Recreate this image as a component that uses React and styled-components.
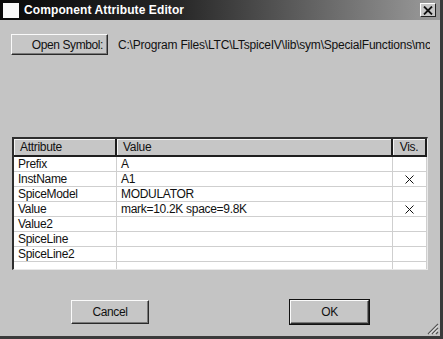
import styled, { createGlobalStyle } from "styled-components";

const GlobalStyle = createGlobalStyle`
  html, body {
    margin: 0;
    padding: 0;
    background: #c4c4c4;
  }
  * {
    box-sizing: border-box;
  }
`;

const Window = styled.div`
  width: 443px;
  height: 339px;
  background: #c4c4c4;
  border-right: 3px solid #3a3a3a;
  border-bottom: 3px solid #3a3a3a;
  display: flex;
  flex-direction: column;
  font-family: "Liberation Sans", Arial, sans-serif;
  font-size: 12px;
  color: #111;
  position: relative;
  overflow: hidden;
`;

const TitleBar = styled.div`
  height: 20px;
  display: flex;
  align-items: center;
  padding: 0 4px 0 3px;
  background: linear-gradient(to right, #0a0a0a 0%, #262626 40%, #9c9c9c 100%);
`;

const WinIcon = styled.div`
  width: 16px;
  height: 15px;
  background: #fafafa;
  margin-right: 5px;
`;

const Title = styled.span`
  flex: 1;
  color: #fff;
  font-weight: bold;
  font-size: 12px;
  letter-spacing: 0.1px;
`;

const CloseButton = styled.div`
  width: 16px;
  height: 14px;
  background: #c8c8c8;
  border: 1px solid;
  border-color: #fff #222 #222 #fff;
  display: flex;
  align-items: center;
  justify-content: center;
`;

const SymbolRow = styled.div`
  display: flex;
  align-items: center;
  margin: 14px 0 0 11px;
  white-space: nowrap;
`;

const Button = styled.div`
  width: ${(p) => p.$w}px;
  height: ${(p) => p.$h || 24}px;
  display: flex;
  align-items: center;
  justify-content: ${(p) => (p.$right ? "flex-end" : "center")};
  padding-right: ${(p) => (p.$right ? 4 : 0)}px;
  background: #c6c6c6;
  border: 1px solid;
  border-color: #fafafa #2a2a2a #2a2a2a #fafafa;
  box-shadow: ${(p) =>
    p.$default
      ? "0 0 0 1px #111, inset -1px -1px 0 #7a7a7a"
      : "inset -1px -1px 0 #7a7a7a"};
  font-size: 12px;
  letter-spacing: -0.4px;
`;

const PathText = styled.span`
  margin-left: 10px;
  overflow: hidden;
  width: 312px;
  letter-spacing: -0.2px;
`;

const Table = styled.div`
  margin: 82px 0 0 12px;
  width: 416px;
  height: 133px;
  background: #fff;
  border-top: 2px solid #2e2e2e;
  border-left: 2px solid #2e2e2e;
  border-right: 1px solid #e8e8e8;
  border-bottom: 1px solid #e8e8e8;
  overflow: hidden;
  display: grid;
  grid-template-columns: 103px 276px 1fr;
  grid-auto-rows: 15px;
  grid-template-rows: 18px;
  letter-spacing: -0.3px;
`;

const HeadCell = styled.div`
  background: #c6c6c6;
  border-right: 2px solid #1e1e1e;
  border-bottom: 2px solid #1e1e1e;
  box-shadow: inset 1px 1px 0 #f4f4f4;
  padding-left: ${(p) => (p.$center ? 0 : 6)}px;
  text-align: ${(p) => (p.$center ? "center" : "left")};
  line-height: 17px;
`;

const Cell = styled.div`
  border-right: 1px solid #cfcfcf;
  border-bottom: 1px solid #cfcfcf;
  padding-left: ${(p) => (p.$center ? 0 : 4)}px;
  display: flex;
  align-items: center;
  justify-content: ${(p) => (p.$center ? "center" : "flex-start")};
  white-space: nowrap;
  overflow: hidden;
`;

const ButtonRow = styled.div`
  display: flex;
  gap: 141px;
  margin: 30px 0 0 71px;
`;

const Grip = styled.svg`
  position: absolute;
  right: 1px;
  bottom: 1px;
`;

const VisMark = () => (
  <svg width="9" height="9" viewBox="0 0 9 9">
    <path d="M0.5 0.5 L8.5 8.5 M8.5 0.5 L0.5 8.5" stroke="#111" strokeWidth="1" />
  </svg>
);

const rows = [
  ["Prefix", "A", false],
  ["InstName", "A1", true],
  ["SpiceModel", "MODULATOR", false],
  ["Value", "mark=10.2K space=9.8K", true],
  ["Value2", "", false],
  ["SpiceLine", "", false],
  ["SpiceLine2", "", false],
  ["", "", false],
];

const App = () => {
  return (
    <>
      <GlobalStyle />
      <Window>
        <TitleBar>
          <WinIcon />
          <Title>Component Attribute Editor</Title>
          <CloseButton>
            <svg width="10" height="9" viewBox="0 0 10 9">
              <path d="M1 0.5 L9 8.5 M9 0.5 L1 8.5" stroke="#111" strokeWidth="1.8" />
            </svg>
          </CloseButton>
        </TitleBar>
        <SymbolRow>
          <Button $w={97} $h={21} $right>
            Open Symbol:
          </Button>
          <PathText>
            C:\Program Files\LTC\LTspiceIV\lib\sym\SpecialFunctions\mc
          </PathText>
        </SymbolRow>
        <Table>
          <HeadCell>Attribute</HeadCell>
          <HeadCell>Value</HeadCell>
          <HeadCell $center>Vis.</HeadCell>
          {rows.map((r, i) => [
            <Cell key={"a" + i}>{r[0]}</Cell>,
            <Cell key={"b" + i}>{r[1]}</Cell>,
            <Cell key={"c" + i} $center>
              {r[2] && <VisMark />}
            </Cell>,
          ])}
        </Table>
        <ButtonRow>
          <Button $w={78}>Cancel</Button>
          <Button $w={79} $default>
            OK
          </Button>
        </ButtonRow>
        <Grip width="12" height="12" viewBox="0 0 12 12">
          <path d="M11 1 L1 11 M11 5 L5 11 M11 9 L9 11" stroke="#555" strokeWidth="1.2" />
          <path d="M11 2.5 L2.5 11 M11 6.5 L6.5 11" stroke="#fff" strokeWidth="0.8" />
        </Grip>
      </Window>
    </>
  );
};

export default App;
